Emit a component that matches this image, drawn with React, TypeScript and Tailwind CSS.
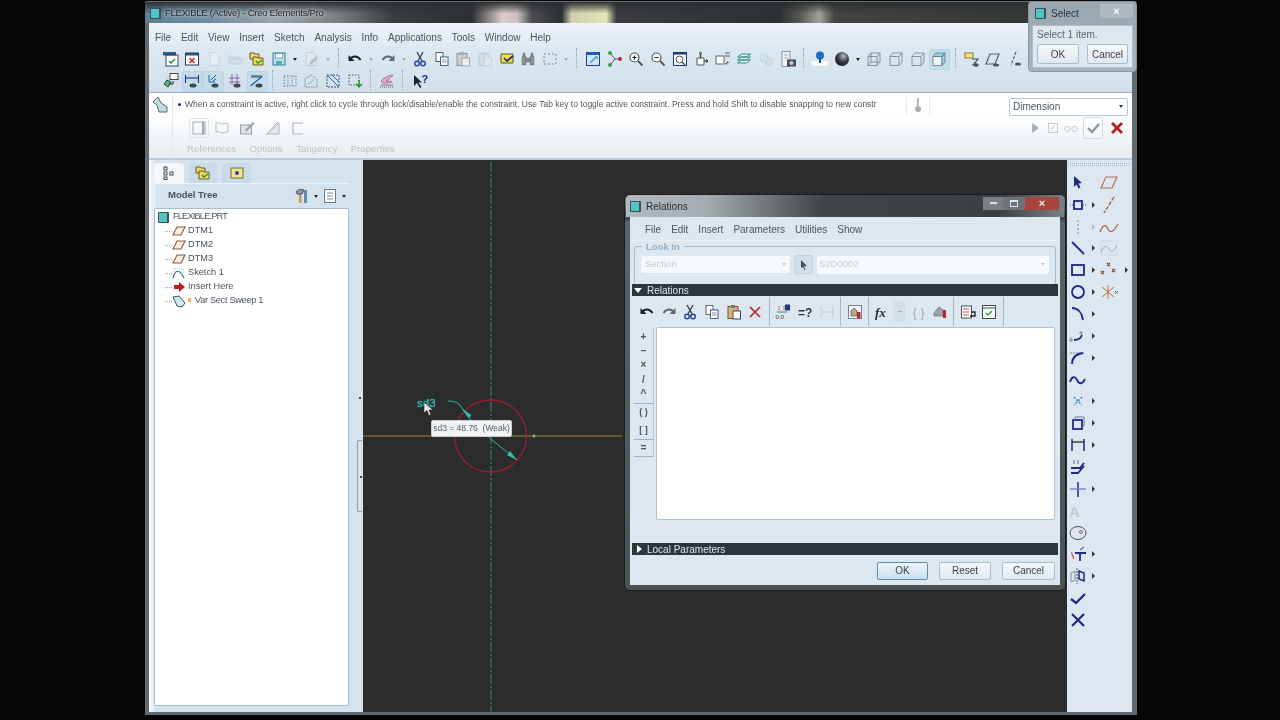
import React from "react";

const NAVY = "#1f2a86";
const Svg = ({ children, faint }: { children: React.ReactNode; faint?: boolean }) => (
  <svg viewBox="0 0 18 18" fill="none" className={faint ? "w-[18px] h-[18px] opacity-35" : "w-[18px] h-[18px]"}>
    {children}
  </svg>
);

const Icons: Record<string, React.ReactNode> = {
  winCheck: (<><rect x="4" y="5" width="12" height="11" fill="#fff" stroke="#3b4a5a" /><rect x="1.5" y="2.5" width="12" height="2.5" fill="#1f5f9e" stroke="#223" strokeWidth=".6" /><path d="M7 11l2 2 4-4" stroke="#2d9a34" strokeWidth="1.6" /></>),
  winX: (<><rect x="2.5" y="3" width="13" height="12" fill="#fff" stroke="#26324a" /><rect x="2.5" y="3" width="13" height="2.5" fill="#2c4f8a" /><path d="M6.5 8l5 5M11.5 8l-5 5" stroke="#c8262a" strokeWidth="1.5" /></>),
  doc: (<path d="M5 2.5h6l3 3v10H5z" fill="#fff" stroke="#aab4bd" />),
  folderOpen: (<path d="M2 14V6h4l1 1h6v2H6l-3 5h11l2-5H6" fill="#cdd6dd" stroke="#9aa6ae" />),
  folders: (<><path d="M2 3h4l1 1h4v5H2z" fill="#f0d67a" stroke="#6a5a20" /><path d="M5 7h4l1 1h5v7H5z" fill="#f3d860" stroke="#6a5a20" /><path d="M8 11l2 2 4-3" stroke="#2b8f2e" strokeWidth="1.4" /></>),
  save: (<><rect x="3" y="3" width="12" height="12" fill="#bfe0ea" stroke="#2f7f9a" /><rect x="5.5" y="3.5" width="7" height="4.5" fill="#fff" stroke="#2f7f9a" strokeWidth=".6" /><rect x="6" y="11" width="6" height="4" fill="#5aa7c2" /></>),
  edit: (<><path d="M4 2.5h7l3 3v10H4z" fill="#eee" stroke="#99a" /><path d="M7 13l7-7 2 2-7 7z" fill="#777" /></>),
  undo: (<><path d="M4.5 8.5C7 5.5 12 5.5 14.5 10" stroke="#1b1f26" strokeWidth="2" /><path d="M2.5 5v6h6z" fill="#1b1f26" /></>),
  redo: (<><path d="M13.5 8.5C11 5.5 6 5.5 3.5 10" stroke="#5d6873" strokeWidth="2" /><path d="M15.5 5v6h-6z" fill="#5d6873" /></>),
  scissors: (<><path d="M6 2l5 9M12 2L7 11" stroke="#3e4650" strokeWidth="1.4" /><circle cx="6" cy="13.5" r="2.3" stroke="#25459a" strokeWidth="1.4" /><circle cx="12" cy="13.5" r="2.3" stroke="#25459a" strokeWidth="1.4" /></>),
  copy: (<><rect x="3" y="2.5" width="7" height="9" fill="#fff" stroke="#5b636c" /><rect x="7.5" y="7" width="7.5" height="8.5" fill="#fff" stroke="#3f5f9a" /><path d="M9 10h4.5M9 12h4.5" stroke="#6b7480" strokeWidth=".8" /></>),
  pasteF: (<><rect x="3" y="3.5" width="10" height="12" fill="#c9ced3" stroke="#8b949c" /><rect x="6" y="2" width="4" height="3" fill="#aaa" /><rect x="8" y="8" width="7.5" height="8" fill="#eee" stroke="#9aa" /></>),
  yellowCheck: (<><path d="M3 4h12v9H3z" fill="#f4e04a" stroke="#5a5520" /><path d="M6 8l3 3 6-5" stroke="#1f2a86" strokeWidth="1.7" /></>),
  binoc: (<path d="M3 6h4v9H3zM11 6h4v9h-4zM7 8h4v4H7zM4 3h2v3H4zM12 3h2v3h-2z" fill="#8a9098" stroke="#666d75" strokeWidth=".5" />),
  selectBox: (<rect x="3" y="4" width="12" height="10" stroke="#7c8790" strokeDasharray="2 2" />),
  blueWin: (<><rect x="2.5" y="2.5" width="13" height="13" fill="#cfe5f7" stroke="#1f3f8a" /><rect x="2.5" y="2.5" width="13" height="2.5" fill="#1f5fae" /><path d="M6 13l6-6M11 7h2v2" stroke="#3f8fc8" strokeWidth="1.2" /></>),
  nodes: (<><path d="M4 3l5 6-5 6M9 9h6" stroke="#4a5a6a" /><circle cx="4" cy="3" r="2" fill="#3a9a4a" /><circle cx="4" cy="15" r="2" fill="#3a9a4a" /><circle cx="14" cy="9" r="2" fill="#c02030" /></>),
  zoomIn: (<><circle cx="7.5" cy="7.5" r="4.5" fill="#fff" stroke="#4a5560" strokeWidth="1.2" /><path d="M11 11l4.5 4.5" stroke="#4a5560" strokeWidth="1.8" /><path d="M5.5 7.5h4M7.5 5.5v4" stroke="#222" /></>),
  zoomOut: (<><circle cx="7.5" cy="7.5" r="4.5" fill="#fff" stroke="#4a5560" strokeWidth="1.2" /><path d="M11 11l4.5 4.5" stroke="#4a5560" strokeWidth="1.8" /><path d="M5.5 7.5h4" stroke="#222" /></>),
  zoomBox: (<><rect x="2.5" y="2.5" width="13" height="13" fill="#fff" stroke="#1e3a72" /><rect x="2.5" y="2.5" width="13" height="2" fill="#1e3a72" /><circle cx="8.5" cy="9.5" r="3.5" stroke="#4a5560" /><path d="M11 12l3 3" stroke="#4a5560" strokeWidth="1.4" /></>),
  spin: (<><path d="M5 8h7v7H5z" fill="#fff" stroke="#4a5560" /><path d="M8.5 2v6" stroke="#333" strokeWidth="1.4" /><circle cx="8.5" cy="3" r="1.5" fill="#3a9a4a" /><path d="M12 11h4M14 9.500l2 1.500-2 1.500" stroke="#222" /></>),
  naming: (<><rect x="2" y="6" width="8" height="8" fill="#fff" stroke="#5a6570" /><path d="M11 3h5M11 6h5" stroke="#555" strokeWidth="1.2" /><path d="M13 11v4l-2-2h4z" fill="#333" /></>),
  layers: (<path d="M2.500 7l4-3h9l-4 3zM2.500 10l4-3h9l-4 3zM2.500 13l4-3h9l-4 3z" fill="#dff2e8" stroke="#2f8f86" />),
  hand: (<><circle cx="7" cy="8" r="4" fill="#cfd5da" stroke="#a0a8b0" /><rect x="9" y="8" width="6" height="7" rx="1" fill="#c8ced3" stroke="#a0a8b0" /></>),
  camera: (<><path d="M3 1.500h8v15H3z" fill="#eef2f5" stroke="#8a949c" /><path d="M5 5h4M5 8h4" stroke="#aab" /><rect x="8" y="9.500" width="9" height="7" fill="#4a4f55" /><circle cx="12.500" cy="13" r="2" fill="#c9ced3" /></>),
  pin: (<><rect x="1" y="11" width="16" height="5" fill="#f2f6fa" /><path d="M3 11h12l2 4H1z" fill="#fff" /><circle cx="9" cy="5.500" r="4" fill="#1b6fc4" /><rect x="8" y="9" width="2" height="4" fill="#1f4fa0" /></>),
  sphere: (<><defs><radialGradient id="sph" cx=".6" cy=".3" r=".8"><stop offset="0" stopColor="#b9bfc4" /><stop offset=".5" stopColor="#3a3e43" /><stop offset="1" stopColor="#0f1114" /></radialGradient></defs><circle cx="9" cy="9" r="7" fill="url(#sph)" /></>),
  cubeA: (<><path d="M3 6.500h9v9H3zM3 6.500l3-3.500h9v9l-3 3.500M12 6.500l3-3.500M6 3v9h9M3 15.500L6 12" stroke="#7d8892" strokeWidth=".9" /></>),
  cubeB: (<path d="M3 6.500h9v9H3zM3 6.500l3-3.500h9v9l-3 3.500M12 6.500l3-3.500" stroke="#7d8892" strokeWidth=".9" />),
  cubeShade: (<><path d="M3 6.500h9v9H3z" fill="#eaf6fa" stroke="#678" strokeWidth=".8" /><path d="M3 6.500l3-3.500h9l-3 3.500zM12 6.500l3-3.500v9l-3 3.500z" fill="#8fd4e4" stroke="#678" strokeWidth=".8" /></>),
  plane1: (<><rect x="2" y="3" width="8" height="5" fill="#f3e38a" stroke="#8a7d30" /><path d="M9 9h6l-5 6h6" stroke="#3a4a55" strokeWidth="1.1" /><circle cx="13" cy="15" r="2" fill="#47535c" /></>),
  plane2: (<><path d="M6 4h9l-4 10H2z" stroke="#555f68" strokeWidth="1.2" /><ellipse cx="12" cy="15" rx="3" ry="1.600" fill="#47535c" /></>),
  plane3: (<><path d="M10 2L5 15" stroke="#555f68" strokeWidth="1.2" strokeDasharray="3 1.500" /><ellipse cx="12" cy="14" rx="3" ry="1.600" fill="#47535c" /></>),
  dimDisp: (<><path d="M2.500 3v8M15.500 3v8M3 6h12" stroke="#1f2a86" /><ellipse cx="10" cy="13.500" rx="3.500" ry="2" fill="#3c4650" /></>),
  consDisp: (<><path d="M4 3v7h6M6 8l5-5M8 9l3-2" stroke="#1f5f9a" /><ellipse cx="10" cy="13.500" rx="3.500" ry="2" fill="#3c4650" /></>),
  gridDisp: (<><path d="M2 6h11M2 10h11M5 2v11M10 2v11" stroke="#7a5a9a" strokeWidth=".9" /><ellipse cx="10" cy="13.500" rx="3.500" ry="2" fill="#3c4650" /></>),
  vertDisp: (<><path d="M2.500 14l11-9H3" stroke="#1f5f9a" strokeWidth="1.200" /><path d="M3 4h11" stroke="#444" /><ellipse cx="11" cy="13.500" rx="3.500" ry="2" fill="#3c4650" /></>),
  refs: (<><rect x="8" y="1.500" width="8" height="6" fill="#fff" stroke="#445" /><path d="M5 8l4 2-3 5-4-3z" fill="#5cb77a" stroke="#244" /><path d="M11 9v3H7" stroke="#223" /></>),
  dash1: (<><rect x="3" y="4" width="12" height="10" stroke="#4d7f9a" strokeDasharray="1.500 1.500" /><path d="M7 4v10M11 4v10" stroke="#6a8a9a" strokeDasharray="1 1" /></>),
  dash2: (<path d="M3 15V7l6-4 6 4v8zM6 12l6-5" stroke="#6a8a9a" strokeDasharray="1.500 1" />),
  dash3: (<><rect x="3" y="3" width="12" height="12" stroke="#2f5f8a" strokeDasharray="2 1" /><path d="M3 3l12 12M8 3l7 7" stroke="#2f5f8a" /></>),
  dash4: (<><rect x="3" y="3" width="10" height="10" stroke="#456" strokeDasharray="1.500 1.500" /><path d="M13 8v7M10 12l3 3 3-3" stroke="#2f8f30" strokeWidth="1.500" /></>),
  sketchHand: (<><path d="M3 9c4-4 9-6 12-6-2 3-5 5-7 6 3 0 5 0 6 1-3 1-6 1-9 1z" fill="#e7a9c4" stroke="#a04a7a" strokeWidth=".7" /><path d="M2 15h14" stroke="#555" strokeDasharray="1 1" /><path d="M3 13h12" stroke="#777" /></>),
  help: (<><path d="M3 3v11l3-3 3 5 1.500-1-3-4.500H11z" fill="#1b2430" /><text x="10.500" y="11" fontSize="11" fontWeight="700" fill="#1f2a86" fontFamily="Liberation Sans">?</text></>),
  box: (<><rect x="3" y="3" width="12" height="12" stroke="#a2a9af" /><path d="M13 3v12" stroke="#a2a9af" strokeWidth="2" /></>),
  flag: (<path d="M3 4c3-1 4 1 6 1s3-1 6-1v9c-3 0-4 1-6 1s-3-2-6-1z" stroke="#b5bbc0" />),
  note: (<><rect x="2.500" y="6" width="11" height="9" fill="#dfe3e6" stroke="#98a0a6" /><path d="M7 11l8-8 1.500 1.500-8 8z" fill="#98a0a6" /></>),
  tang: (<><path d="M3 15h12V4z" fill="#e4e8ea" stroke="#b0b6bb" /><path d="M2 16L14 3" stroke="#b0b6bb" /></>),
  bracket: (<path d="M14 4H4v11h10" stroke="#b0b6bb" strokeWidth="1.200" />),
  paste3: (<><rect x="3" y="3.500" width="10" height="12" fill="#d2b67e" stroke="#6a5a30" /><rect x="6" y="2" width="4" height="3" fill="#777" /><rect x="8" y="8" width="7.500" height="8" fill="#fff" stroke="#445" /></>),
  redX: (<path d="M4 4l10 10M14 4L4 14" stroke="#b9282a" strokeWidth="1.700" />),
  sd: (<><path d="M5 3v5M10 3v5" stroke="#a04030" strokeDasharray="1.500 1" /><path d="M3 9h10" stroke="#2a8f3a" /><text x="1.500" y="16" fontSize="6" fill="#333" fontFamily="Liberation Sans">0.0</text><rect x="11" y="1.500" width="5" height="6" fill="#1f3a7a" /></>),
  eqQ: (<text x="2" y="14" fontSize="12" fontWeight="700" fill="#2a3440" fontFamily="Liberation Sans">=?</text>),
  dimF: (<path d="M3 3v12M15 3v12M3 9h12" stroke="#8f979e" />),
  lockDoc: (<><rect x="2.500" y="2.500" width="13" height="13" fill="#eef2f5" stroke="#7a8590" /><path d="M5 13V8l3-3 3 3v5z" fill="#b9a98a" stroke="#555" strokeWidth=".7" /><rect x="11" y="9" width="3.500" height="6.500" fill="#b8262a" /></>),
  fx: (<text x="1" y="14" fontSize="13" fontStyle="italic" fontWeight="700" fill="#222b34" fontFamily="Liberation Serif">fx</text>),
  braces: (<text x="3.500" y="14" fontSize="13" fill="#a5acb2" fontFamily="Liberation Sans">{"{ }"}</text>),
  lockTh: (<><path d="M3 10l5-6 4 3v6H3z" fill="#9aa4ac" stroke="#667" strokeWidth=".6" /><rect x="12" y="7" width="3" height="8" fill="#b8262a" /></>),
  listArr: (<><rect x="2.500" y="3" width="10" height="12" fill="#fff" stroke="#4a5560" /><path d="M4 6h6M4 9h6M4 12h6" stroke="#b8444a" strokeWidth=".9" /><path d="M12 9h4v4h-5" stroke="#1b2430" strokeWidth="1.300" /></>),
  verify: (<><rect x="2.500" y="2.500" width="13" height="13" fill="#fff" stroke="#3e4a55" /><path d="M2.500 5h13" stroke="#3e4a55" /><path d="M6 10l2 2 4-4" stroke="#2d9a34" strokeWidth="1.400" /></>),
};

const Ic = ({ n, faint }: { n: string; faint?: boolean }) => <Svg faint={faint}>{Icons[n]}</Svg>;

const Cell = ({ n, faint, active }: { n: string; faint?: boolean; active?: boolean }) => (
  <div className="w-[21.6px] h-[22px] flex items-center justify-center shrink-0">
    <div className={active ? "w-[21px] h-[21px] flex items-center justify-center rounded-[2px] bg-[#c3dcea] border border-[#bcd3e1]" : "w-[21px] h-[21px] flex items-center justify-center"}>
      <Ic n={n} faint={faint} />
    </div>
  </div>
);

const Tri = ({ faint }: { faint?: boolean }) => (
  <div className={faint ? "w-[11px] h-[22px] flex items-center justify-center shrink-0 opacity-30" : "w-[11px] h-[22px] flex items-center justify-center shrink-0"}>
    <div className="w-0 h-0 border-l-[2.500px] border-r-[2.500px] border-t-[3px] border-l-transparent border-r-transparent border-t-[#222]" />
  </div>
);

const Sep = () => (
  <div className="w-[11px] h-[22px] flex justify-center shrink-0">
    <div className="w-[2px] h-[20px] border-l border-dotted border-[#8ea4b2]" />
  </div>
);

const RArrow = ({ faint }: { faint?: boolean }) => (
  <div className={faint ? "w-[8px] flex justify-center opacity-25" : "w-[8px] flex justify-center"}>
    <div className="w-0 h-0 border-t-[3px] border-b-[3px] border-l-[3px] border-t-transparent border-b-transparent border-l-[#333]" />
  </div>
);

const Lines = ({ children }: { children: React.ReactNode }) => (
  <svg viewBox="0 0 20 20" fill="none" stroke={NAVY} strokeWidth="1.800" className="w-[20px] h-[20px]">{children}</svg>
);

const leftTools: { d: React.ReactNode; arrow?: boolean; faintArrow?: boolean }[] = [
  { d: <path d="M6 3l8 7-3.500.5 2 4-2 1-2-4L6 14z" fill={NAVY} stroke="none" /> },
  { d: <><rect x="6" y="6" width="8" height="8" /><path d="M2 10h3M15 10h3" strokeWidth=".8" strokeDasharray="1 1" /></>, arrow: true },
  { d: <path d="M10 3v14" strokeWidth="1.500" strokeDasharray="2 2" stroke="#9aa6b0" />, arrow: true, faintArrow: true },
  { d: <path d="M4 4l12 12" />, arrow: true },
  { d: <rect x="4" y="5" width="12" height="10" />, arrow: true },
  { d: <circle cx="10" cy="10" r="6" />, arrow: true },
  { d: <path d="M4 4c6 0 10 5 11 12" />, arrow: true },
  { d: <><path d="M6 14c4 0 7-2 8-5" /><path d="M13 5v4M11 7h4M3 11v5M1 14h4" strokeWidth=".7" stroke="#5a6a7a" /></>, arrow: true },
  { d: <><path d="M4 16c0-6 4-10 11-11" /><path d="M2 5h14" strokeWidth=".8" strokeDasharray="2 1" stroke="#5a6a7a" /></>, arrow: true },
  { d: <path d="M2 12c2-6 5-6 7-2s5 5 8-1" /> },
  { d: <path d="M6 6l8 8M14 6l-8 8" strokeWidth="1.500" stroke="#2f8fc0" strokeDasharray="2 1.500" />, arrow: true },
  { d: <><rect x="5" y="7" width="9" height="9" /><path d="M7 7V4h9v9h-2" strokeWidth="1" stroke="#6a78a8" /></>, arrow: true },
  { d: <><path d="M4 4v12M16 4v12" strokeWidth="1.500" /><path d="M4 7h12" strokeWidth="1.300" stroke="#222" /></>, arrow: true },
  { d: <><path d="M3 11h9l4-5M3 16h7l6-7" /><path d="M6 3v4M10 3v4" strokeWidth="1" stroke="#667" /></> },
  { d: <><path d="M10 3v15" strokeWidth="1.500" /><path d="M2 10h16" strokeWidth="1.500" stroke="#7d8ad0" /></>, arrow: true },
  { d: <text x="1" y="16" fontSize="15" fontWeight="700" fill="#c4cad0" stroke="none" fontFamily="Liberation Sans">A</text> },
  { d: <><ellipse cx="10" cy="11" rx="8" ry="6.500" strokeWidth="1" stroke="#4a5560" fill="#dfe5ea" /><circle cx="13" cy="10" r="1.500" strokeWidth=".8" stroke="#4a5560" /></> },
  { d: <><path d="M4 8c-2 3 3 3 1 7" stroke="#c0603a" strokeWidth="1.200" /><path d="M7 9h11M12 9v8" /><path d="M12 6l4-3" stroke="#333" strokeWidth="1" /></>, arrow: true },
  { d: <><path d="M9 2v16" strokeWidth=".8" strokeDasharray="2 1" stroke="#333" /><path d="M3 7l4-2v9l-4 2z" strokeWidth="1" stroke="#889" /><path d="M11 5l5 2v8l-5-2z" strokeWidth="1.500" /></>, arrow: true },
  { d: <path d="M3 11l5 4 9-9" strokeWidth="2.400" /> },
  { d: <path d="M4 4l12 12M16 4L4 16" strokeWidth="2.200" /> },
];

const rightTools: { d: React.ReactNode; arrow?: boolean }[] = [
  { d: <path d="M7 4h11l-5 11H2z" stroke="#b0744f" strokeWidth="1.200" /> },
  { d: <path d="M15 2L5 18" stroke="#a5643f" strokeWidth="1.400" strokeDasharray="4 1.500" /> },
  { d: <path d="M1 15c3-8 6-8 8-3s6 2 10-5" stroke="#a5643f" strokeWidth="1.200" /> },
  { d: <><path d="M2 14c3-7 6-7 8-3s5 2 8-4" stroke="#9aa6b0" strokeWidth="1" /><rect x="2" y="3" width="16" height="14" stroke="#b8c2ca" strokeWidth=".8" strokeDasharray="1 1.500" /></> },
  { d: <path d="M8 3l3 3M11 3L8 6M2 11l3 3M5 11l-3 3M13 9l3 3M16 9l-3 3" stroke="#7d4a32" strokeWidth="1.100" />, arrow: true },
  { d: <><path d="M9 3v14M3 5l12 10M3 15L15 5" stroke="#c06a32" strokeWidth="1" /><path d="M16 9l3 3M19 9l-3 3" stroke="#5a6a7a" strokeWidth=".9" /></> },
];

const tree = [
  ["plane", "DTM1"],
  ["plane", "DTM2"],
  ["plane", "DTM3"],
  ["sketch", "Sketch 1"],
  ["insert", "Insert Here"],
  ["sweep", "Var Sect Sweep 1"],
];

const TreeIcon = ({ k }: { k: string }) => (
  <svg viewBox="0 0 14 14" fill="none" className="w-[14px] h-[14px]">
    {k === "plane" && <path d="M5 3h8L9 11H1z" stroke="#8a5a3c" strokeWidth="1.100" fill="#f7efe6" />}
    {k === "sketch" && <><path d="M1 12c2-8 6-10 11 0" stroke="#2a6fb0" strokeWidth="1.100" /><path d="M1 3h12M1 6h12" stroke="#6a9ac8" strokeWidth=".6" strokeDasharray="1 1" /></>}
    {k === "insert" && <path d="M2 5h5V2l6 5-6 5V9H2z" fill="#b71c24" />}
    {k === "sweep" && <path d="M1 3l6-1 6 7-3 4-5-1z" fill="#cfe7ef" stroke="#3d5562" />}
  </svg>
);

const cubeIcon = <div className="w-[11px] h-[11px] rounded-[1px] bg-[#55c4c4] border border-[#39505c] border-r-[2px] shrink-0" />;

const Btn = ({ t, w, primary }: { t: string; w: string; primary?: boolean }) => (
  <div className={w + (primary ? " flex items-center justify-center rounded-[2px] border border-[#5f8bab] bg-[linear-gradient(#f0f6fb,#c9def0)] text-[10px] text-[#3b444c]" : " flex items-center justify-center rounded-[2px] border border-[#a8bccb] bg-[linear-gradient(#f4f8fb,#dfe9f1)] text-[10px] text-[#3b444c]")}>{t}</div>
);

const relTools: (string | null)[] = ["undo", "redo", "scissors", "copy", "paste3", "redX", null, "sd", "eqQ", "dimF", null, "lockDoc", null, "fx", "TRI", "braces", "lockTh", null, "listArr", "verify", null];

export default function App() {
  return (
    <div className="relative w-[1280px] h-[720px] overflow-hidden bg-[#060606] blur-[0.35px] font-['Liberation_Sans',Arial,sans-serif] text-[10px] text-[#4a545e]">
      {/* main window */}
      <div className="ml-[145px] mt-[1px] w-[992px] h-[714px] flex flex-col pl-[4px] pr-[5px] pb-[3px] bg-[#62696e] rounded-t-[3px]">
        <div className="-ml-[4px] -mr-[5px] h-[22px] shrink-0 flex items-center pl-[5px] pt-[1px] gap-[4px] rounded-t-[3px] border-t border-[#6a6f72] bg-[linear-gradient(180deg,#2d3033_0%,#2d303300_55%),linear-gradient(90deg,#5e7f94_0%,#6a8a9f_6%,#9aa4aa_13%,#7d8286_19%,#3a3d40_25%,#2d3033_33%,#6a6466_34%,#d9cbca_36%,#cdc2c0_37.500%,#4a4c4e_39%,#2d3033_42%,#cfcfae_43%,#e4e6b8_46.500%,#3a3c3e_47.500%,#2d3033_64%,#55584f_66%,#a0a498_68%,#41443f_69.500%,#2d3033_100%)]">
          {cubeIcon}
          <span className="text-[9.500px] tracking-[-0.25px] text-[#23282c] [text-shadow:0_0_3px_#d4d8dc,0_0_6px_#d4d8dc]">FLEXIBLE (Active) - Creo Elements/Pro</span>
        </div>

        {/* menu */}
        <div className="h-[23px] shrink-0 flex items-center gap-[9.800px] pl-[5px] pt-[5px] bg-[linear-gradient(#eef4f9,#dee9f2)] border-l border-[#f5f8fb]">
          {["File", "Edit", "View", "Insert", "Sketch", "Analysis", "Info", "Applications", "Tools", "Window", "Help"].map((m) => (
            <span key={m}>{m}</span>
          ))}
        </div>

        {/* toolbars */}
        <div className="h-[47px] shrink-0 pl-[11px] flex flex-col pt-[2px] bg-[linear-gradient(#dde9f2,#d0e0ec)] border-b border-[#9db3c3]">
          <div className="flex h-[22px] items-center">
            <Cell n="winCheck" /><Cell n="winX" /><Cell n="doc" faint /><Cell n="folderOpen" faint /><Cell n="folders" /><Cell n="save" /><Tri /><Cell n="edit" faint /><Tri faint /><Sep />
            <Cell n="undo" /><Tri faint /><Cell n="redo" /><Tri faint /><Cell n="scissors" /><Cell n="copy" /><Cell n="pasteF" /><Cell n="pasteF" faint /><Cell n="yellowCheck" /><Cell n="binoc" /><Cell n="selectBox" /><Tri faint /><Sep />
            <Cell n="blueWin" /><Cell n="nodes" /><Cell n="zoomIn" /><Cell n="zoomOut" /><Cell n="zoomBox" /><Cell n="spin" /><Cell n="naming" /><Cell n="layers" /><Cell n="hand" faint /><Cell n="camera" /><Sep />
            <Cell n="pin" /><Cell n="sphere" /><Tri /><Cell n="cubeA" /><Cell n="cubeB" /><Cell n="cubeB" /><Cell n="cubeShade" active /><Sep />
            <Cell n="plane1" /><Cell n="plane2" /><Cell n="plane3" />
          </div>
          <div className="flex h-[22px] items-center">
            <Cell n="refs" /><Cell n="dimDisp" active /><Cell n="consDisp" active /><Cell n="gridDisp" /><Cell n="vertDisp" active /><Sep />
            <Cell n="dash1" /><Cell n="dash2" /><Cell n="dash3" /><Cell n="dash4" /><Sep />
            <Cell n="sketchHand" /><Sep /><Cell n="help" />
          </div>
        </div>

        {/* message + dashboard */}
        <div className="h-[67px] shrink-0 flex bg-[linear-gradient(#ffffff_30%,#e6ecf1)] border-b-2 border-[#b9cbd8]">
          <div className="w-[23px] shrink-0 pl-[2px] pt-[3px]">
            <svg viewBox="0 0 18 18" fill="none" className="w-[18px] h-[18px]"><path d="M2 6l5-5 3 6 6 4v5H8L6 9z" fill="#bfe0da" stroke="#4d6a72" /></svg>
          </div>
          <div className="flex-1 flex flex-col border-l border-[#e2e8ec] my-[2px]">
            <div className="h-[20px] flex items-center pl-[5px] pt-[1px]">
              <span className="w-[3px] h-[3px] rounded-full bg-[#1a1f8a] mr-[4px] mb-[3px]" />
              <span className="w-[693px] text-[8.510px] mb-[2px] whitespace-nowrap text-[#4f5963]">When a constraint is active, right click to cycle through lock/disable/enable the constraint. Use Tab key to toggle active constraint. Press and hold Shift to disable snapping to new constr</span>
              <div className="ml-[28px] w-[24px] h-[18px] flex justify-center border-x border-[#e5eaee]">
                <svg viewBox="0 0 8 16" className="w-[8px] h-[16px]"><rect x="3" y="1" width="2" height="9" fill="#b0b6bb" /><circle cx="4" cy="12" r="3" fill="#a8aeb3" /></svg>
              </div>
              <div className="ml-[79px] mt-[2px] w-[119px] h-[18px] flex items-center justify-between px-[3px] rounded-[2px] border border-[#b8c8d4] bg-white text-[10px]">
                <span>Dimension</span>
                <div className="w-0 h-0 border-l-[2.500px] border-r-[2.500px] border-t-[3px] border-l-transparent border-r-transparent border-t-[#333] mr-[1px]" />
              </div>
            </div>
            <div className="h-[24px] flex items-center pl-[16px] pt-[2px]">
              <div className="w-[20px] h-[20px] flex items-center justify-center rounded-[3px] border border-[#dfe3e6] mr-[2px]"><Ic n="box" /></div>
              <div className="w-[21px] flex justify-center"><Ic n="flag" /></div>
              <div className="w-[30px] flex justify-center"><Ic n="note" /></div>
              <div className="w-[21px] flex justify-center"><Ic n="tang" /></div>
              <div className="w-[30px] flex justify-center"><Ic n="bracket" /></div>
              <div className="ml-[719px] w-0 h-0 border-t-[5px] border-b-[5px] border-l-[7px] border-t-transparent border-b-transparent border-l-[#a9b0b5]" />
              <div className="ml-[9px] w-[10px] h-[10px] border border-[#c5cbd0] text-[8px] leading-[8px] text-center text-[#bbb]">✓</div>
              <svg viewBox="0 0 20 10" fill="none" stroke="#bfc5ca" className="w-[18px] h-[10px] ml-[4px]"><circle cx="6" cy="6" r="3" /><circle cx="14" cy="6" r="3" /></svg>
              <div className="ml-[3px] w-[20px] h-[22px] flex items-center justify-center rounded-[2px] border border-[#d3d9de]">
                <svg viewBox="0 0 14 14" fill="none" className="w-[14px] h-[14px]"><path d="M2 7l4 4 7-8" stroke="#8f979d" strokeWidth="2.400" /></svg>
              </div>
              <svg viewBox="0 0 14 14" fill="none" className="w-[14px] h-[14px] ml-[7px]"><path d="M2 2l10 10M12 2L2 12" stroke="#b81f1f" strokeWidth="2.800" /></svg>
            </div>
            <div className="flex items-center gap-[13.500px] pl-[14px] mt-[3px] text-[9.600px] text-[#bcc3c9]">
              <span>References</span><span>Options</span><span>Tangency</span><span>Properties</span>
            </div>
          </div>
        </div>

        {/* body */}
        <div className="flex-1 flex min-h-0">
          <div className="relative w-[214px] shrink-0 flex flex-col pl-[5px] pr-[14px] pb-[6px] bg-[linear-gradient(90deg,#ffffff_0,#d5e3ee_3%)]">
            <div className="h-[23px] shrink-0 flex items-end gap-[5px]">
              <div className="w-[30px] h-[20px] flex items-center justify-center rounded-t-[3px] bg-[#f4f8fb]">
                <svg viewBox="0 0 14 14" fill="none" stroke="#333" strokeWidth=".9" className="w-[14px] h-[14px]"><rect x="2" y="1" width="3" height="3" /><rect x="2" y="6" width="3" height="3" /><rect x="2" y="11" width="3" height="2.500" /><rect x="8" y="6" width="3" height="3" /></svg>
              </div>
              <div className="w-[28px] h-[20px] flex items-center justify-center rounded-t-[3px] bg-[#c9dbe8]"><Ic n="folders" /></div>
              <div className="w-[29px] h-[20px] flex items-center justify-center rounded-t-[3px] bg-[#c9dbe8]">
                <svg viewBox="0 0 14 14" className="w-[14px] h-[14px]"><rect x="1" y="2" width="12" height="10" fill="#eee68a" stroke="#6e6830" /><circle cx="7" cy="7" r="2" fill="#35429a" /></svg>
              </div>
            </div>
            <div className="h-[25px] shrink-0 flex items-center pb-[2px] border-t border-l border-[#eef3f7] rounded-tl-[3px]">
              <span className="ml-[13px] font-bold text-[9.500px] text-[#48525c]">Model Tree</span>
              <div className="ml-auto flex items-center pt-[2px]">
                <svg viewBox="0 0 16 16" fill="none" className="w-[16px] h-[16px]"><path d="M6 15V6M2 4c2-3 5-3 8-2l-2 4H3z" fill="#8a9aa8" stroke="#4a5560" /><rect x="5" y="7" width="2.500" height="8" fill="#d69a3a" /><rect x="10" y="2" width="3" height="13" fill="#5a90b8" /></svg>
                <Tri />
                <svg viewBox="0 0 16 16" fill="none" className="w-[16px] h-[16px] ml-[1px]"><rect x="2.500" y="1.500" width="11" height="13" fill="#fff" stroke="#6a7680" /><path d="M5 5h6M5 8h6M5 11h6" stroke="#7a8a98" /></svg>
                <Tri />
              </div>
            </div>
            <div className="flex-1 bg-white border border-[#a9bccb] rounded-[2px] pt-[1px] text-[9.200px]">
              <div className="h-[14px] flex items-center gap-[4px] pl-[3px]">{cubeIcon}<span className="tracking-[-0.8px]">FLEXIBLE.PRT</span></div>
              {tree.map(([k, t]) => (
                <div key={t} className="h-[14px] flex items-center pl-[10px]">
                  <span className="w-[7px] border-t border-dotted border-[#9aa]" />
                  <TreeIcon k={k} />
                  {k === "sweep" && <span className="w-[3px] h-[4px] bg-[#d6c83a] mr-[4px] ml-[2px] mb-[3px]" />}
                  <span className={k === "sweep" ? "tracking-[-0.3px]" : "ml-[2px]"}>{t}</span>
                </div>
              ))}
            </div>
            <div className="absolute right-[2px] top-[237px] w-[2px] h-[2px] bg-[#444]" />
            <div className="absolute right-[1px] top-[280px] w-[5px] h-[72px] border border-r-0 border-[#8f9ca6] rounded-l-[2px]" />
            <div className="absolute right-[1px] top-[316px] w-[2px] h-[2px] bg-[#444]" />
          </div>

          {/* canvas */}
          <div className="relative w-[704px] shrink-0 bg-[#2c2c2c]">
            <svg viewBox="0 0 704 552" fill="none" className="w-full h-full">
              <path d="M128 2V552" stroke="#2f8d82" strokeWidth="1" strokeDasharray="10 2 2 2" />
              <path d="M0 276H259" stroke="#938a3c" strokeWidth="1.200" />
              <circle cx="127.500" cy="276" r="36" stroke="#9a1f33" strokeWidth="1.300" />
              <path d="M85 241c5 0 9 1 12 4l8 12 24 23 25 20" stroke="#2fb39f" strokeWidth="1" />
              <path d="M98 248l8 10 2.500-3z" fill="#2fc0ac" />
              <path d="M147 291l-3 4 10 5z" fill="#2fc0ac" />
              <circle cx="171" cy="276" r="1.500" fill="#9aa" />
            </svg>
            <span className="absolute left-[54px] top-[235px] text-[11.500px] text-[#2fc0ac] [text-shadow:0_0_1px_#2fc0ac]">sd3</span>
            <svg viewBox="0 0 12 16" className="absolute left-[60px] top-[241px] w-[12px] h-[16px]"><path d="M1 1v11l3-2.500 2 5 2-1-2-4.500h4z" fill="#e6e8ea" stroke="#222" strokeWidth=".6" /></svg>
            <div className="absolute left-[68px] top-[260px] w-[81px] h-[17px] flex items-center justify-center rounded-[2px] border border-[#c9cdd0] bg-[#f1f4f6] text-[8.500px] text-[#555f68] whitespace-nowrap">sd3 = 48.76&nbsp; (Weak)</div>
          </div>

          {/* right toolbar */}
          <div className="w-[65px] shrink-0 bg-[#dce7f1] flex flex-col pt-[3px]">
            <div className="h-[3px] mx-[1px] border-y border-dotted border-[#a9bccb] mb-[6px] shrink-0" />
            <div className="flex">
              <div className="flex flex-col pl-[1px]">
                {leftTools.map((t, i) => (
                  <div key={i} className="h-[21.850px] flex items-center">
                    <Lines>{t.d}</Lines>
                    <div className="ml-[1px]">{t.arrow ? <RArrow faint={t.faintArrow} /> : <div className="w-[8px]" />}</div>
                  </div>
                ))}
              </div>
              <div className="flex flex-col ml-[2px]">
                {rightTools.map((t, i) => (
                  <div key={i} className="h-[21.850px] flex items-center">
                    <Lines>{t.d}</Lines>
                    <div className="ml-[3px]">{t.arrow ? <RArrow /> : null}</div>
                  </div>
                ))}
              </div>
            </div>
          </div>
        </div>
      </div>

      {/* Select dialog */}
      <div className="absolute left-[1028px] top-[1px] w-[109px] h-[71px] flex flex-col rounded-[4px] border border-[#8c969d] bg-[linear-gradient(#9aa7b0,#a4b4c0)] px-[3px] pb-[3px]">
        <div className="h-[23px] shrink-0 flex items-center gap-[5px] pl-[3px] text-[10px] text-[#2d3338]">
          {cubeIcon}<span>Select</span>
          <div className="ml-auto mb-[5px] w-[33px] h-[14px] flex items-center justify-center rounded-b-[2px] bg-[#aeb9c0] text-white text-[10px] font-bold">×</div>
        </div>
        <div className="flex-1 bg-[#dde8f1] border border-[#aebdc8] px-[4px] pt-[1px]">
          <div className="text-[10px] h-[14px] text-[#5b646c]">Select 1 item.</div>
          <div className="flex justify-between h-[23px] pt-[3px]">
            <Btn t="OK" w="w-[42px]" /><Btn t="Cancel" w="w-[41px]" />
          </div>
        </div>
      </div>

      {/* Relations dialog */}
      <div className="absolute left-[624px] top-[194px] w-[442px] h-[397px] flex flex-col rounded-[6px] border border-[#1b1e20] bg-[linear-gradient(#8d9498,#3b4043_6%,#5a6368_7%,#4b5256)] px-[5px] pb-[5px]">
        <div className="h-[22px] shrink-0 flex items-center gap-[5px] rounded-t-[5px] bg-[linear-gradient(90deg,#b2babf,#a5adb2_18%,#3f4447_45%,#3a3f42_85%,#7a8085)] -mx-[4px] pl-[4px] pr-[5px]">
          {cubeIcon}
          <span className="text-[10px] text-[#2a3034]">Relations</span>
          <div className="ml-auto mb-[6px] flex h-[13px] items-stretch">
            <div className="w-[20px] flex items-center justify-center bg-[#7a8084]"><div className="w-[7px] h-[2px] bg-[#dde]" /></div>
            <div className="w-[22px] flex items-center justify-center bg-[#6d7478]"><div className="w-[8px] h-[7px] border border-[#dde] border-t-2" /></div>
            <div className="w-[34px] flex items-center justify-center rounded-br-[2px] bg-[#a8443c] text-[#eee] text-[11px] font-bold leading-none">×</div>
          </div>
        </div>
        <div className="flex-1 flex flex-col min-h-0 bg-[#dce7f0]">
          <div className="h-[24px] shrink-0 flex items-center gap-[10px] pl-[15px] pt-[1px] border-b border-[#e9f0f5]">
            {["File", "Edit", "Insert", "Parameters", "Utilities", "Show"].map((m) => <span key={m}>{m}</span>)}
          </div>
          <div className="relative h-[38px] mt-[5px] mx-[4px] shrink-0 flex items-center gap-[4px] pl-[6px] pr-[6px] pb-[2px] border border-b-0 border-[#a7bac8] rounded-t-[4px]">
            <span className="absolute left-[7px] -top-[6px] px-[4px] bg-[#dce7f0] text-[9.500px] font-bold text-[#9ab0c4] leading-[11px]">Look In</span>
            <div className="w-[149px] h-[17px] flex items-center justify-between px-[4px] rounded-[2px] bg-[#f6f9fb] text-[#c3c9cf] text-[9.500px]">
              <span>Section</span><div className="w-0 h-0 border-l-[2px] border-r-[2px] border-t-[3px] border-l-transparent border-r-transparent border-t-[#c3c9cf]" />
            </div>
            <div className="w-[19px] h-[19px] flex items-center justify-center rounded-[2px] bg-[#d2dfe9] border border-[#c4d2dd]">
              <svg viewBox="0 0 10 12" className="w-[10px] h-[12px]"><path d="M2 1l6 6-3 .5 1.500 3-1 .5-1.500-3L2 9z" fill="#46505a" /></svg>
            </div>
            <div className="flex-1 h-[18px] flex items-center justify-between pl-[2px] pr-[4px] rounded-[2px] bg-[#f6f9fb] text-[#c3c9cf] text-[9.500px]">
              <span>S2D0002</span><div className="w-0 h-0 border-l-[2px] border-r-[2px] border-t-[3px] border-l-transparent border-r-transparent border-t-[#c3c9cf]" />
            </div>
          </div>
          <div className="h-[12px] shrink-0 mx-[2px] flex items-center gap-[2px] pl-[2px] bg-[#2c363c] text-[#dfe5e9] text-[10px]">
            <div className="w-0 h-0 border-l-[4px] border-r-[4px] border-t-[5px] border-l-transparent border-r-transparent border-t-white mr-[3px]" />
            <span>Relations</span>
          </div>
          <div className="h-[31px] shrink-0 flex items-center pl-[6px]">
            {relTools.map((n, i) =>
              n === null ? (
                <div key={i} className="w-[3.500px] h-[29px] border-r border-[#a3b8c7] mr-[3px] shrink-0" />
              ) : n === "TRI" ? (
                <div key={i} className="w-[11px] h-[21px] mr-[2px] flex items-center justify-center rounded-[2px] bg-[#cfdce7] shrink-0 opacity-70"><span className="w-[4px] h-[1px] bg-[#99a]" /></div>
              ) : (
                <div key={i} className="w-[21.700px] flex justify-center shrink-0"><Ic n={n} faint={n === "dimF"} /></div>
              )
            )}
          </div>
          <div className="h-[193px] shrink-0 flex">
            <div className="w-[21px] shrink-0 ml-[3px] mr-[2px] mt-[1px] pl-[1px] flex flex-col border-r border-[#b5c7d4] self-start">
              <div className="h-[76px] flex flex-col items-center justify-around py-[2px] border-b border-[#9fb3c2] text-[10px] font-bold leading-none text-[#4a545e]">
                <span>+</span><span>–</span><span>×</span><span>/</span><span>^</span>
              </div>
              <div className="h-[36px] flex flex-col items-center justify-around border-b border-[#9fb3c2] text-[9px] font-bold leading-none text-[#4a545e]">
                <span>( )</span><span>[ ]</span>
              </div>
              <div className="h-[17px] flex items-center justify-center border-b border-[#9fb3c2] text-[10px] font-bold leading-none text-[#4a545e]">=</div>
            </div>
            <div className="w-[399px] shrink-0 bg-white border border-[#adc2d2] rounded-[2px]" />
          </div>
          <div className="h-[23px] shrink-0" />
          <div className="h-[12px] shrink-0 mx-[2px] flex items-center gap-[5px] pl-[5px] bg-[#2c363c] text-[#dfe5e9] text-[10px]">
            <div className="w-0 h-0 border-t-[4px] border-b-[4px] border-l-[5px] border-t-transparent border-b-transparent border-l-white" />
            <span>Local Parameters</span>
          </div>
          <div className="flex-1 flex items-center justify-end gap-[11px] pr-[5px] [&>div]:h-[18px] pt-[1px]">
            <Btn t="OK" w="w-[51px]" primary /><Btn t="Reset" w="w-[52px]" /><Btn t="Cancel" w="w-[53px]" />
          </div>
        </div>
      </div>
    </div>
  );
}
